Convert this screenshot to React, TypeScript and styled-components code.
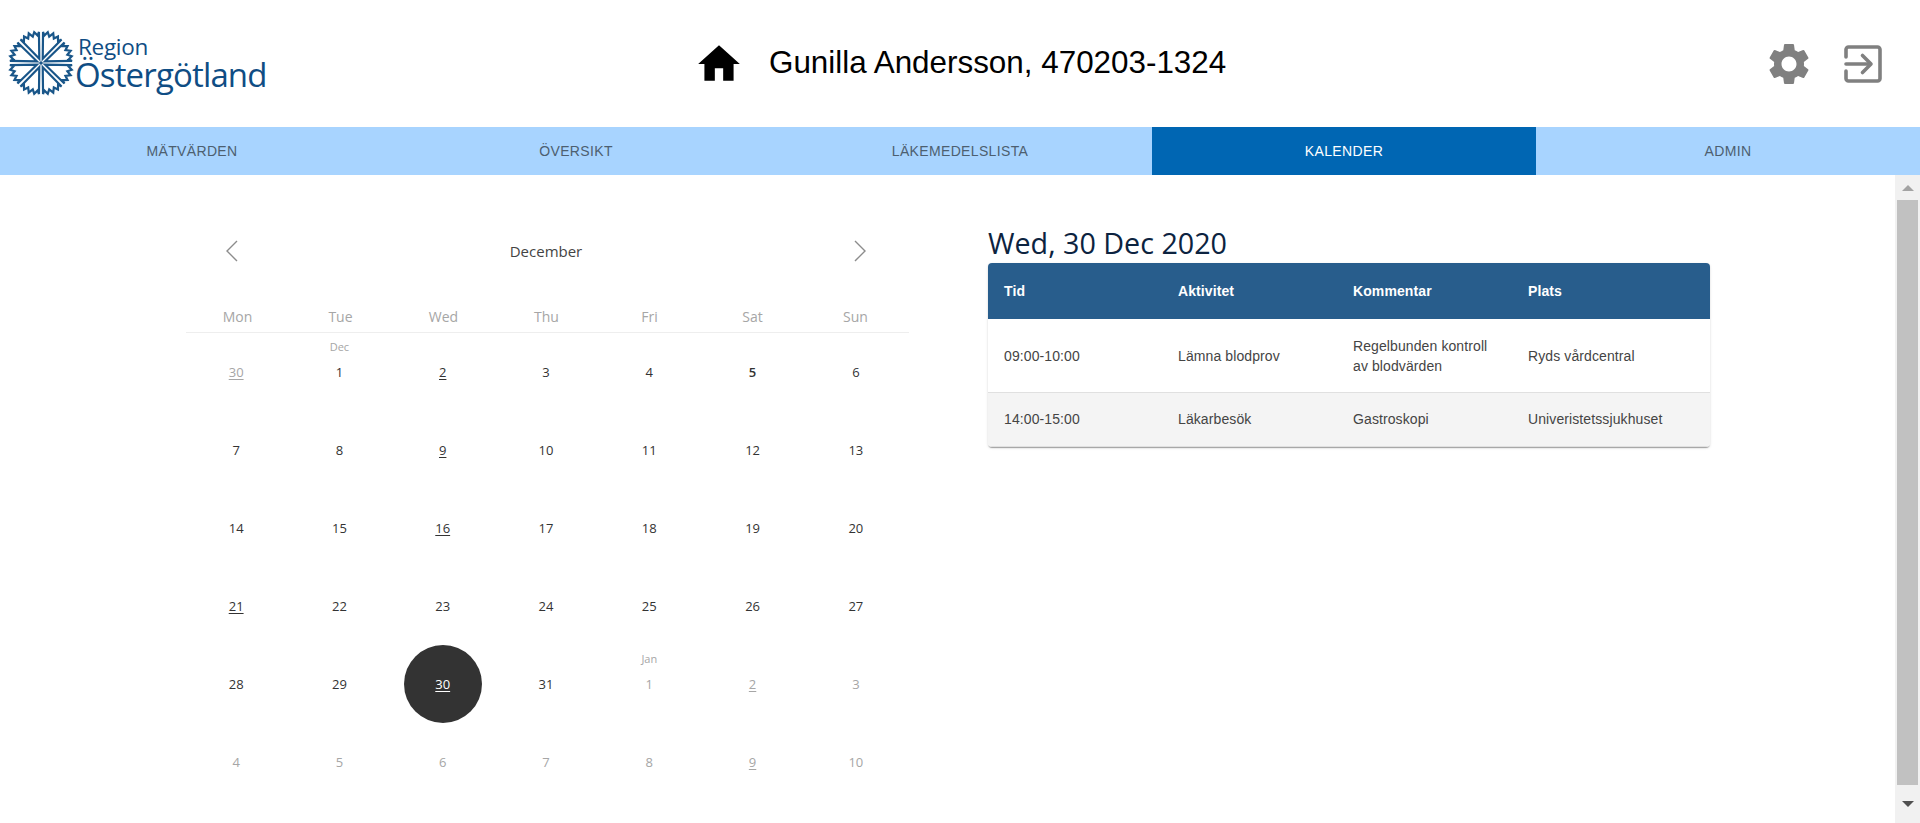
import React from 'react';
import styled, { createGlobalStyle } from 'styled-components';

const GlobalStyle = createGlobalStyle`
    html, body {
        margin: 0;
        padding: 0;
        height: 100%;
        overflow: hidden;
        background: white;
    }
    * {
        box-sizing: border-box;
    }
`;

const Page = styled.div`
    display: flex;
    flex-direction: column;
    height: 823px;
    font-family: 'Liberation Sans', Arial, sans-serif;
`;

const Header = styled.header`
    display: grid;
    grid-template-columns: 694px 1fr auto;
    align-items: center;
    height: 127px;
    padding-right: 38px;
`;

const Logo = styled.div`
    display: flex;
    align-items: center;
    padding: 0 0 2px 8px;
    color: #0f4d84;
    font-family: 'Open Sans', sans-serif;
`;

const LogoText = styled.div`
    display: flex;
    flex-direction: column;
    margin-left: 1px;
    padding-top: 2px;
`;

const LogoRegion = styled.span`
    font-size: 22.5px;
    line-height: 22px;
    margin-left: 3px;
    letter-spacing: -0.3px;
`;

const LogoName = styled.span`
    font-size: 33px;
    line-height: 33px;
    letter-spacing: -0.85px;
`;

const Patient = styled.div`
    display: flex;
    align-items: center;
    gap: 25px;
`;

const PatientName = styled.h1`
    margin: 0 0 2px;
    font-size: 31.4px;
    font-weight: 400;
    color: black;
`;

const Actions = styled.div`
    display: flex;
    align-items: center;
    gap: 30px;
`;

const Tabs = styled.nav`
    display: grid;
    grid-template-columns: repeat(5, 1fr);
    height: 48px;
    flex: none;
    background: #a8d4ff;
`;

const Tab = styled.a<{ $active?: boolean }>`
    display: flex;
    align-items: center;
    justify-content: center;
    font-size: 14px;
    letter-spacing: 0.35px;
    text-transform: uppercase;
    color: ${(p) => (p.$active ? 'white' : '#4d5f70')};
    background: ${(p) => (p.$active ? '#0066b3' : 'transparent')};
`;

const Body = styled.div`
    display: flex;
    flex: 1;
    min-height: 0;
`;

const Main = styled.main`
    display: flex;
    flex: 1;
    min-width: 0;
    overflow: hidden;
    padding-left: 186px;
`;

const Scrollbar = styled.div`
    display: flex;
    flex-direction: column;
    align-items: center;
    flex: none;
    width: 25px;
    background: #f1f1f1;
`;

const ScrollArrow = styled.div<{ $down?: boolean }>`
    display: flex;
    align-items: center;
    justify-content: center;
    flex: none;
    height: ${(p) => (p.$down ? '38px' : '25px')};

    &::after {
        content: '';
        border-left: 6px solid transparent;
        border-right: 6px solid transparent;
        border-bottom: ${(p) => (p.$down ? '0' : '6px solid #a3a3a3')};
        border-top: ${(p) => (p.$down ? '6px solid #505050' : '0')};
    }
`;

const ScrollThumb = styled.div`
    flex: 1;
    width: 21px;
    background: #c1c1c1;
`;

const Calendar = styled.section`
    flex: none;
    width: 723px;
`;

const MonthBar = styled.div`
    display: flex;
    align-items: center;
    justify-content: space-between;
    height: 40px;
    margin-top: 56px;
    padding: 0 42px 0 39px;
    font-family: 'Open Sans', sans-serif;
    font-size: 15px;
    color: #444;
`;

const Weekdays = styled.div`
    display: grid;
    grid-template-columns: repeat(7, 1fr);
    align-items: center;
    height: 62px;
    padding: 30px 2px 0 0;
    border-bottom: 1px solid #eee;
    font-family: 'Open Sans', sans-serif;
    font-size: 14px;
    color: #a6a6a6;
    text-align: center;
`;

const Days = styled.div`
    display: grid;
    grid-template-columns: repeat(7, 1fr);
    grid-auto-rows: 78px;
    width: 723px;
    margin-left: -1.5px;
    font-family: 'Open Sans', sans-serif;
`;

const Day = styled.div<{ $muted?: boolean; $strong?: boolean; $link?: boolean; $selected?: boolean }>`
    position: relative;
    display: flex;
    align-items: center;
    justify-content: center;
    justify-self: center;
    width: 78px;
    height: 78px;
    border-radius: 50%;
    font-size: 13px;
    font-weight: ${(p) => (p.$strong ? 600 : 400)};
    text-decoration: ${(p) => (p.$link ? 'underline' : 'none')};
    text-underline-offset: 2px;
    color: ${(p) => (p.$selected ? 'white' : p.$muted ? '#a6a6a6' : '#333')};
    background: ${(p) => (p.$selected ? '#333' : 'transparent')};
`;

const DayMonth = styled.span`
    position: absolute;
    top: 6px;
    left: 0;
    right: 0;
    text-align: center;
    font-size: 11px;
    color: #a6a6a6;
`;

const Agenda = styled.section`
    flex: none;
    width: 722px;
    margin-left: 79px;
    padding-top: 48px;
`;

const AgendaTitle = styled.h2`
    margin: 0;
    height: 40px;
    font-family: 'Open Sans', sans-serif;
    font-size: 28.7px;
    line-height: 39px;
    font-weight: 400;
    white-space: nowrap;
    color: #0c2340;
`;

const TableCard = styled.div`
    border-radius: 4px;
    overflow: hidden;
    box-shadow: 0 2px 1px -1px rgba(0, 0, 0, 0.2), 0 1px 1px 0 rgba(0, 0, 0, 0.14), 0 1px 3px 0 rgba(0, 0, 0, 0.12);
`;

const Table = styled.table`
    width: 100%;
    table-layout: fixed;
    border-collapse: collapse;
    font-size: 14px;
    letter-spacing: 0.1px;
`;

const HeadRow = styled.tr`
    height: 56px;
    background: #285d8c;
`;

const HeadCell = styled.th`
    padding: 0 16px;
    text-align: left;
    font-weight: 700;
    color: white;
`;

const Row = styled.tr<{ $shaded?: boolean }>`
    height: ${(p) => (p.$shaded ? '54px' : '73px')};
    background: ${(p) => (p.$shaded ? '#f4f4f4' : 'white')};

    & > td {
        padding-top: ${(p) => (p.$shaded ? '0' : '2px')};
    }
`;

const Cell = styled.td`
    padding: 0 16px;
    line-height: 20px;
    color: #444;
    border-bottom: 1px solid #e0e0e0;
`;

const ColTime = styled.col`
    width: 174px;
`;

const ColWide = styled.col`
    width: 175px;
`;

const columns = ['Tid', 'Aktivitet', 'Kommentar', 'Plats'];

const appointments = [
    ['09:00-10:00', 'Lämna blodprov', 'Regelbunden kontroll av blodvärden', 'Ryds vårdcentral'],
    ['14:00-15:00', 'Läkarbesök', 'Gastroskopi', 'Univeristetssjukhuset'],
];

const tabs = ['Mätvärden', 'Översikt', 'Läkemedelslista', 'Kalender', 'Admin'];

const weekdays = ['Mon', 'Tue', 'Wed', 'Thu', 'Fri', 'Sat', 'Sun'];

type CalDay = { n: number; muted?: boolean; link?: boolean; strong?: boolean; selected?: boolean; month?: string };

const buildDays = (): CalDay[] => {
    const days: CalDay[] = [{ n: 30, muted: true, link: true }];
    for (let n = 1; n <= 31; n++) {
        days.push({
            n,
            link: [2, 9, 16, 21, 30].includes(n),
            strong: n === 5,
            selected: n === 30,
            month: n === 1 ? 'Dec' : undefined,
        });
    }
    for (let n = 1; n <= 10; n++) {
        days.push({ n, muted: true, link: n === 2 || n === 9, month: n === 1 ? 'Jan' : undefined });
    }
    return days;
};

const Floret = ({ angle }: { angle: number }) => (
    <path
        transform={`rotate(${angle})`}
        d="M0 -4.500 L-10 -29.500 L-7.500 -26.500 L-5.500 -31 L-2.500 -27.500 L0 -32 L2.500 -27.500 L5.500 -31 L7.500 -26.500 L10 -29.500 Z"
    />
);

const LogoMark = () => (
    <svg width="66" height="66" viewBox="-33 -33 66 66" fill="none" stroke="#195689" strokeWidth="2.2" strokeLinejoin="miter">
        {[22.5, 67.5, 112.5, 157.5, 202.5, 247.5, 292.5, 337.5].map((a) => (
            <Floret key={a} angle={a} />
        ))}
        <circle r="1.8" fill="#195689" stroke="none" />
    </svg>
);

const HomeIcon = () => (
    <svg width="50" height="50" viewBox="0 0 24 24" fill="black">
        <path d="M10 20v-6h4v6h5v-8h3L12 3 2 12h3v8z" />
    </svg>
);

const GearIcon = () => (
    <svg width="50" height="50" viewBox="0 0 24 24" fill="#808080">
        <path d="M19.14 12.94c.04-.3.06-.61.06-.94 0-.32-.02-.64-.07-.94l2.03-1.58c.18-.14.23-.41.12-.61l-1.92-3.32c-.12-.22-.37-.29-.59-.22l-2.39.96c-.5-.38-1.03-.7-1.62-.94l-.36-2.54c-.04-.24-.24-.41-.48-.41h-3.84c-.24 0-.43.17-.47.41l-.36 2.54c-.59.24-1.13.57-1.62.94l-2.39-.96c-.22-.08-.47 0-.59.22L2.74 8.87c-.12.21-.08.47.12.61l2.03 1.58c-.05.3-.09.63-.09.94s.02.64.07.94l-2.03 1.58c-.18.14-.23.41-.12.61l1.92 3.32c.12.22.37.29.59.22l2.39-.96c.5.38 1.03.7 1.62.94l.36 2.54c.05.24.24.41.48.41h3.84c.24 0 .44-.17.47-.41l.36-2.54c.59-.24 1.13-.56 1.62-.94l2.39.96c.22.08.47 0 .59-.22l1.92-3.32c.12-.22.07-.47-.12-.61l-2.01-1.58zM12 15.6c-1.98 0-3.6-1.62-3.6-3.6s1.62-3.6 3.6-3.6 3.6 1.62 3.6 3.6-1.62 3.6-3.6 3.6z" />
    </svg>
);

const ExitIcon = () => (
    <svg width="38" height="38" viewBox="0 0 38 38" fill="none" stroke="#808080" strokeWidth="3.6" strokeLinecap="round" strokeLinejoin="round">
        <path d="M2 12V4.500A2.500 2.500 0 0 1 4.500 2H33.500A2.500 2.500 0 0 1 36 4.500V33.500A2.500 2.500 0 0 1 33.500 36H4.500A2.500 2.500 0 0 1 2 33.500V26" />
        <path d="M2 19H26" />
        <path d="M18.500 10.500L27 19L18.500 27.500" />
    </svg>
);

const Chevron = ({ flip }: { flip?: boolean }) => (
    <svg width="14" height="22" viewBox="0 0 14 22" fill="none" stroke="#8c8c8c" strokeWidth="1.4">
        <path d={flip ? 'M2 1L12 11L2 21' : 'M12 1L2 11L12 21'} />
    </svg>
);

export default function App() {
    return (
        <Page>
            <GlobalStyle />
            <Header>
                <Logo>
                    <LogoMark />
                    <LogoText>
                        <LogoRegion>Region</LogoRegion>
                        <LogoName>Östergötland</LogoName>
                    </LogoText>
                </Logo>
                <Patient>
                    <HomeIcon />
                    <PatientName>Gunilla Andersson, 470203-1324</PatientName>
                </Patient>
                <Actions>
                    <GearIcon />
                    <ExitIcon />
                </Actions>
            </Header>
            <Tabs>
                {tabs.map((t) => (
                    <Tab key={t} $active={t === 'Kalender'}>
                        {t}
                    </Tab>
                ))}
            </Tabs>
            <Body>
                <Main>
                    <Calendar>
                        <MonthBar>
                            <Chevron />
                            December
                            <Chevron flip />
                        </MonthBar>
                        <Weekdays>
                            {weekdays.map((d) => (
                                <span key={d}>{d}</span>
                            ))}
                        </Weekdays>
                        <Days>
                            {buildDays().map((d, i) => (
                                <Day key={i} $muted={d.muted} $link={d.link} $strong={d.strong} $selected={d.selected}>
                                    {d.month && <DayMonth>{d.month}</DayMonth>}
                                    {d.n}
                                </Day>
                            ))}
                        </Days>
                    </Calendar>
                    <Agenda>
                        <AgendaTitle>Wed, 30 Dec 2020</AgendaTitle>
                        <TableCard>
                            <Table>
                                <colgroup>
                                    <ColTime />
                                    <ColWide />
                                    <ColWide />
                                    <col />
                                </colgroup>
                                <thead>
                                    <HeadRow>
                                        {columns.map((c) => (
                                            <HeadCell key={c}>{c}</HeadCell>
                                        ))}
                                    </HeadRow>
                                </thead>
                                <tbody>
                                    {appointments.map((row, i) => (
                                        <Row key={row[0]} $shaded={i === 1}>
                                            {row.map((value) => (
                                                <Cell key={value}>{value}</Cell>
                                            ))}
                                        </Row>
                                    ))}
                                </tbody>
                            </Table>
                        </TableCard>
                    </Agenda>
                </Main>
                <Scrollbar>
                    <ScrollArrow />
                    <ScrollThumb />
                    <ScrollArrow $down />
                </Scrollbar>
            </Body>
        </Page>
    );
}
